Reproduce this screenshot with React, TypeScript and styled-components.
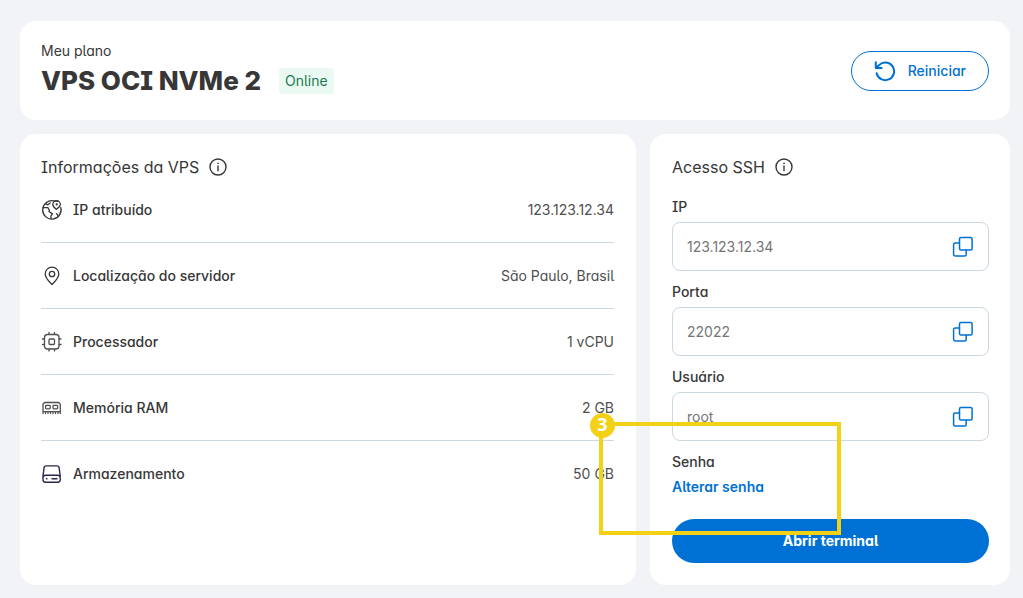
import React from "react";
import styled, { createGlobalStyle } from "styled-components";

const GlobalStyle = createGlobalStyle`
  *, *::before, *::after { box-sizing: border-box; }
  body {
    margin: 0;
    background: #f2f3f7;
    color: #373737;
    font-family: Inter, "Noto Sans", sans-serif;
    font-feature-settings: "cv05", "cv08", "cv11";
    font-size: 14px;
    line-height: 20px;
  }
  button, input { font: inherit; font-feature-settings: inherit; }
  h1, h2, p, dl, dt, dd { margin: 0; }
`;

const Page = styled.main`
  display: grid;
  grid-template-columns: minmax(0, 1fr) 360px;
  gap: 14px;
  padding: 21px 13px 13px 20px;
`;

const Card = styled.section`
  position: relative;
  background: #fff;
  border-radius: 16px;
  padding: 23px 22px 22px 21px;
`;

const PlanCard = styled(Card)`
  grid-column: 1 / -1;
  display: flex;
  align-items: center;
  justify-content: space-between;
  padding: 20px 21px 19px;
`;

const AccessCard = styled(Card)`
  padding: 23px 21px 22px 22px;
`;

const PlanLabel = styled.p`
  font-size: 14px;
`;

const PlanLine = styled.div`
  display: flex;
  align-items: center;
  gap: 18px;
  padding: 7px 0;
`;

const PlanName = styled.h1`
  font-size: 26px;
  line-height: 26px;
  font-weight: 800;
`;

const Status = styled.span`
  padding: 3px 6px;
  border-radius: 3px;
  background: #eafaf3;
  color: #1c7a50;
  font-size: 14px;
`;

const OutlineButton = styled.button`
  display: flex;
  align-items: center;
  gap: 12px;
  height: 40px;
  padding: 0 22px;
  border: 1px solid #0071d4;
  border-radius: 20px;
  background: #fff;
  color: #0071d4;
  font-weight: 500;
  cursor: pointer;
`;

const Heading = styled.h2`
  display: flex;
  align-items: center;
  gap: 9px;
  font-size: 16px;
  line-height: 20px;
  font-weight: 400;
`;

const SpecRow = styled.div`
  display: flex;
  align-items: center;
  justify-content: space-between;
  height: 66px;
  border-bottom: 1px solid #ccd8df;
  &:last-child { border-bottom-color: transparent; }
`;

const SpecName = styled.dt`
  display: flex;
  align-items: center;
  gap: 10px;
  font-weight: 500;
`;

const SpecValue = styled.dd`
  color: #4f4f4f;
`;

const Field = styled.div`
  display: flex;
  flex-direction: column;
  gap: 5px;
  margin-bottom: 11px;
  &:first-of-type { margin-top: 20px; }
`;

const FieldLabel = styled.label`
  font-weight: 500;
`;

const InputBox = styled.div`
  display: flex;
  align-items: center;
  height: 49px;
  padding: 0 14px;
  border: 1px solid #ccd8df;
  border-radius: 8px;
`;

const TextInput = styled.input`
  flex: 1;
  min-width: 0;
  padding: 0;
  border: 0;
  outline: 0;
  background: transparent;
  color: #757575;
`;

const CopyButton = styled.button`
  display: flex;
  padding: 0;
  border: 0;
  background: none;
  color: #0071d4;
  cursor: pointer;
`;

const PasswordBlock = styled.div`
  display: flex;
  flex-direction: column;
  align-items: flex-start;
  gap: 5px;
  margin-bottom: 22px;
  font-weight: 500;
`;

const TextLink = styled.a`
  color: #0071d4;
  font-weight: 600;
  text-decoration: none;
`;

const PrimaryButton = styled.button`
  display: block;
  width: 100%;
  height: 44px;
  border: 0;
  border-radius: 22px;
  background: #0071d4;
  color: #fff;
  font-weight: 700;
  cursor: pointer;
`;

/* Step outline drawn over the password area, hung on the access card. */
const StepFrame = styled.div`
  position: absolute;
  top: 288px;
  left: -51px;
  width: 242px;
  height: 113px;
  border: 4px solid #f3d117;
  pointer-events: none;
`;

const StepBadge = styled.span`
  position: absolute;
  top: -13px;
  left: -13px;
  width: 25px;
  height: 25px;
  border-radius: 50%;
  background: #f3d117;
  color: #fff;
  font-family: "Open Sans", "Noto Sans", sans-serif;
  font-size: 18px;
  line-height: 23px;
  font-weight: 700;
  text-align: center;
`;

const Svg = ({ size = 22, children, width = 1.3, color = "currentColor" }: {
  size?: number; width?: number; color?: string; children: React.ReactNode;
}) => (
  <svg width={size} height={size} viewBox={`0 0 ${size} ${size}`} fill="none" stroke={color}
    strokeWidth={width} strokeLinecap="round" strokeLinejoin="round" aria-hidden="true">
    {children}
  </svg>
);

const InfoIcon = () => (
  <Svg size={20} width={1.4}>
    <circle cx="10" cy="10" r="8" />
    <path d="M10 9v4.8" />
    <circle cx="10" cy="6.3" r=".5" fill="currentColor" strokeWidth=".6" />
  </Svg>
);

const RestartIcon = () => (
  <Svg width={2}>
    <path d="M1.8 2.2v5.9h5.9M2.2 7.7l2.9-2.6A8.8 8.8 0 1 1 2.700 13.200" />
  </Svg>
);

const CopyIcon = () => (
  <Svg width={1.5}>
    <rect x="7.500" y="1.500" width="12.600" height="12.600" rx="1.500" />
    <path d="M7.500 7H3.100A1.500 1.500 0 0 0 1.600 8.500v10a1.500 1.500 0 0 0 1.500 1.500h9.600a1.500 1.500 0 0 0 1.500-1.500v-4.200" />
  </Svg>
);

const GlobeIcon = () => (
  <Svg>
    <path d="M12.600 1.900A9.200 9.200 0 1 0 19.800 8.700M13 2h4.200" />
    <path d="M15.300 10.400c-1.900-1.700-3.500-3-3.500-5a3.700 3.500 0 0 1 7.600 0c0 2-2 3.200-4.100 5z" />
    <circle cx="15.700" cy="5.400" r=".5" />
    <path d="M2 8.700h4.800l1.500 2.300-.3 1.500 3.500 2.400-1.700 2.200.4 2.600M4.600 4.700l2.200 1.100 2.400-1.800M17.600 17l-2.200-2.400" />
  </Svg>
);

const PinIcon = () => (
  <Svg>
    <path d="M11 19.600C7.300 15.600 4.200 12.800 4.200 8.900a6.800 6.800 0 0 1 13.600 0c0 3.900-3.100 6.700-6.800 10.700z" />
    <circle cx="11" cy="9" r="2.700" />
  </Svg>
);

const ChipIcon = () => (
  <Svg color="#4f4f4f">
    <rect x="3.500" y="3.500" width="14.500" height="14.500" rx="3" />
    <rect x="8" y="8" width="5.500" height="5.500" rx="1" />
    <path d="M8 3.300V1.500M13.500 3.300V1.500M8 18.200v1.800M13.500 18.200v1.800M3.300 8H1.500M3.300 13.500H1.500M18.200 8h1.800M18.200 13.500h1.800" />
  </Svg>
);

const RamIcon = () => (
  <Svg color="#4f4f4f">
    <path d="M2 16.500V7.200l1.600-1.700h14l1.700 1.700v9.300M2 14.600h17.300M4.500 14.800v1.700M7 14.800v1.700M9.500 14.800v1.700M12 14.800v1.700M14.500 14.800v1.700M17 14.800v1.700" />
    <rect x="4.600" y="8.300" width="4.600" height="3.500" rx=".8" />
    <rect x="12" y="8.300" width="4.600" height="3.500" rx=".8" />
  </Svg>
);

const DiskIcon = () => (
  <Svg color="#29264f" width={1.4}>
    <path d="M2 13 3 5a2.400 2.400 0 0 1 2.400-2.100h10.400A2.400 2.400 0 0 1 18.200 5l1 8" />
    <rect x="2" y="12.300" width="17.200" height="6.900" rx="2.400" />
    <path d="M5.500 15.800h.5M11 15.800h5" />
  </Svg>
);

const specs = [
  { name: "IP atribuído", value: "123.123.12.34", icon: <GlobeIcon /> },
  { name: "Localização do servidor", value: "São Paulo, Brasil", icon: <PinIcon /> },
  { name: "Processador", value: "1 vCPU", icon: <ChipIcon /> },
  { name: "Memória RAM", value: "2 GB", icon: <RamIcon /> },
  { name: "Armazenamento", value: "50 GB", icon: <DiskIcon /> },
];

const fields = [
  { id: "ip", label: "IP", value: "123.123.12.34" },
  { id: "porta", label: "Porta", value: "22022" },
  { id: "usuario", label: "Usuário", value: "root" },
];

export default function App() {
  return (
    <>
      <GlobalStyle />
      <Page>
        <PlanCard>
          <div>
            <PlanLabel>Meu plano</PlanLabel>
            <PlanLine>
              <PlanName>VPS OCI NVMe 2</PlanName>
              <Status>Online</Status>
            </PlanLine>
          </div>
          <OutlineButton type="button"><RestartIcon />Reiniciar</OutlineButton>
        </PlanCard>
        <Card>
          <Heading>Informações da VPS <InfoIcon /></Heading>
          <dl>
            {specs.map((s) => (
              <SpecRow key={s.name}>
                <SpecName>{s.icon}{s.name}</SpecName>
                <SpecValue>{s.value}</SpecValue>
              </SpecRow>
            ))}
          </dl>
        </Card>
        <AccessCard>
          <Heading>Acesso SSH <InfoIcon /></Heading>
          {fields.map((f) => (
            <Field key={f.id}>
              <FieldLabel htmlFor={f.id}>{f.label}</FieldLabel>
              <InputBox>
                <TextInput id={f.id} value={f.value} readOnly />
                <CopyButton type="button" aria-label={`Copiar ${f.label}`}><CopyIcon /></CopyButton>
              </InputBox>
            </Field>
          ))}
          <PasswordBlock>
            <span>Senha</span>
            <TextLink href="#senha">Alterar senha</TextLink>
          </PasswordBlock>
          <PrimaryButton type="button">Abrir terminal</PrimaryButton>
          <StepFrame><StepBadge>3</StepBadge></StepFrame>
        </AccessCard>
      </Page>
    </>
  );
}
